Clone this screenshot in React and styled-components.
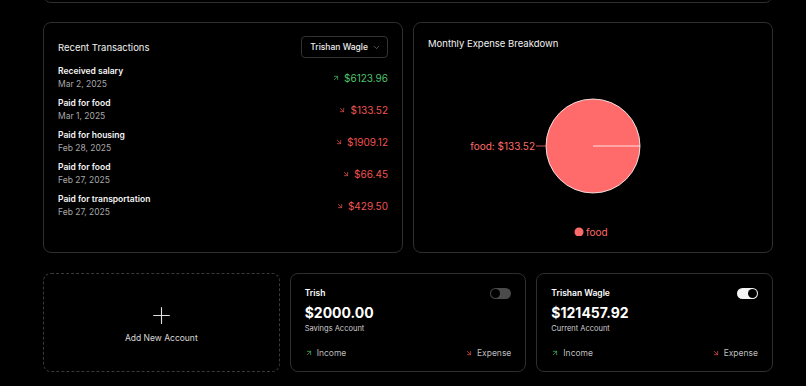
import React from 'react';
import styled, { createGlobalStyle } from 'styled-components';
import { ArrowUpRight, ArrowDownRight, ChevronDown, Plus } from 'lucide-react';

const GlobalStyle = createGlobalStyle`
    html, body {
        margin: 0;
        background: #000;
        color: #fff;
        font-family: Inter, "Noto Sans", sans-serif;
    }
`;

const Page = styled.div`
    width: 730px;
    margin-left: 43px;
    display: flex;
    flex-direction: column;
    gap: 19px;
`;

const Card = styled.div`
    box-sizing: border-box;
    border: 1px solid #2e2e2e;
    border-radius: 8px;
    background: #000;
    padding: 13px 14px;
`;

const StubCard = styled(Card)`
    height: 40px;
    margin-top: -37px;
`;

const TwoCol = styled.div`
    display: grid;
    grid-template-columns: 1fr 1fr;
    gap: 10px;
    margin-bottom: 1px;
`;

const TallCard = styled(Card)`
    height: 231px;
    display: flex;
    flex-direction: column;
`;

const Header = styled.div`
    display: flex;
    align-items: center;
    justify-content: space-between;
    height: 22px;
`;

const Title = styled.h2`
    margin: 0;
    font-size: 9.5px;
    font-weight: 400;
    color: #f2f2f2;
`;

const SelectButton = styled.button`
    box-sizing: border-box;
    height: 22px;
    padding: 0 6px 0 8px;
    border: 1px solid #333;
    border-radius: 4px;
    background: #000;
    color: #eee;
    font-family: inherit;
    font-size: 8.5px;
    font-weight: 500;
    display: flex;
    align-items: center;
    gap: 4px;
`;

const List = styled.div`
    display: flex;
    flex-direction: column;
    gap: 6px;
    margin-top: 7px;
`;

const Row = styled.div`
    display: flex;
    align-items: center;
    justify-content: space-between;
`;

const RowTitle = styled.div`
    font-size: 8.5px;
    font-weight: 600;
    line-height: 13px;
    color: #f5f5f5;
`;

const RowDate = styled.div`
    font-size: 8.5px;
    line-height: 13px;
    color: #a8a8a8;
`;

const Amount = styled.div`
    display: flex;
    align-items: center;
    gap: 4px;
    font-size: 10px;
    color: ${(p) => (p.$up ? '#4cc46c' : '#ef5350')};
`;

const ChartTitle = styled(Title)`
    line-height: 14px;
    margin-top: 1px;
    margin-bottom: 5px;
`;

const ThreeCol = styled.div`
    display: grid;
    grid-template-columns: repeat(3, 1fr);
    gap: 10px;
`;

const AddCard = styled.button`
    box-sizing: border-box;
    height: 99px;
    border: 1px dashed #3a3a3a;
    border-radius: 8px;
    background: #000;
    color: #d8d8d8;
    font-family: inherit;
    font-size: 8.5px;
    line-height: 11px;
    display: flex;
    flex-direction: column;
    align-items: center;
    justify-content: center;
    gap: 4px;
    padding: 0;
`;

const AccountCard = styled(Card)`
    height: 99px;
    display: flex;
    flex-direction: column;
`;

const AccountTop = styled.div`
    display: flex;
    align-items: center;
    justify-content: space-between;
`;

const AccountName = styled.div`
    font-size: 8.5px;
    font-weight: 600;
    line-height: 13px;
`;

const Toggle = styled.div`
    box-sizing: border-box;
    width: 21px;
    height: 11px;
    border-radius: 6px;
    background: ${(p) => (p.$on ? '#f4f4f4' : '#4a4a4a')};
    display: flex;
    align-items: center;
    justify-content: ${(p) => (p.$on ? 'flex-end' : 'flex-start')};
    padding: 1px;

    &::after {
        content: '';
        width: 9px;
        height: 9px;
        border-radius: 50%;
        background: #000;
    }
`;

const Balance = styled.div`
    font-size: 14px;
    font-weight: 700;
    line-height: 18px;
    margin-top: 4px;
`;

const AccountType = styled.div`
    font-size: 7.5px;
    line-height: 10px;
    margin-top: 2px;
    color: #cfcfcf;
`;

const Flows = styled.div`
    margin-top: auto;
    display: flex;
    justify-content: space-between;
    align-items: center;
    font-size: 8.5px;
    color: #bdbdbd;
`;

const Flow = styled.span`
    display: flex;
    align-items: center;
    gap: 4px;
    svg {
        color: ${(p) => (p.$up ? '#4cc46c' : '#ef5350')};
    }
`;

const transactions = [
    { title: 'Received salary', date: 'Mar 2, 2025', amount: '$6123.96', up: true },
    { title: 'Paid for food', date: 'Mar 1, 2025', amount: '$133.52' },
    { title: 'Paid for housing', date: 'Feb 28, 2025', amount: '$1909.12' },
    { title: 'Paid for food', date: 'Feb 27, 2025', amount: '$66.45' },
    { title: 'Paid for transportation', date: 'Feb 27, 2025', amount: '$429.50' },
];

const accounts = [
    { name: 'Trish', balance: '$2000.00', type: 'Savings Account', on: false },
    { name: 'Trishan Wagle', balance: '$121457.92', type: 'Current Account', on: true },
];

const PIE = '#ff6b6b';

function ExpensePie() {
    return (
        <svg width="330" height="180" viewBox="0 0 330 180">
            <circle cx="165" cy="90" r="47" fill={PIE} stroke="#fff" strokeWidth="0.8" />
            <line x1="165" y1="90" x2="212" y2="90" stroke="#fff" strokeWidth="0.8" />
            <line x1="108" y1="90" x2="118" y2="90" stroke={PIE} strokeWidth="0.8" />
            <text x="107" y="93.5" textAnchor="end" fill={PIE} fontSize="10" fontFamily="Inter, sans-serif">
                food: $133.52
            </text>
            <circle cx="151" cy="176" r="4.5" fill={PIE} />
            <text x="158" y="179.5" fill={PIE} fontSize="10" fontFamily="Inter, sans-serif">
                food
            </text>
        </svg>
    );
}

export default function App() {
    return (
        <>
            <GlobalStyle />
            <Page>
                <StubCard />
                <TwoCol>
                    <TallCard>
                        <Header>
                            <Title>Recent Transactions</Title>
                            <SelectButton type="button">
                                Trishan Wagle
                                <ChevronDown size={9} strokeWidth={1.5} color="#999" />
                            </SelectButton>
                        </Header>
                        <List>
                            {transactions.map((t, i) => (
                                <Row key={i}>
                                    <div>
                                        <RowTitle>{t.title}</RowTitle>
                                        <RowDate>{t.date}</RowDate>
                                    </div>
                                    <Amount $up={t.up}>
                                        {t.up ? (
                                            <ArrowUpRight size={8} strokeWidth={2} />
                                        ) : (
                                            <ArrowDownRight size={8} strokeWidth={2} />
                                        )}
                                        {t.amount}
                                    </Amount>
                                </Row>
                            ))}
                        </List>
                    </TallCard>
                    <TallCard>
                        <ChartTitle>Monthly Expense Breakdown</ChartTitle>
                        <ExpensePie />
                    </TallCard>
                </TwoCol>
                <ThreeCol>
                    <AddCard type="button">
                        <Plus size={27} strokeWidth={1} color="#e0e0e0" />
                        Add New Account
                    </AddCard>
                    {accounts.map((a) => (
                        <AccountCard key={a.name}>
                            <AccountTop>
                                <AccountName>{a.name}</AccountName>
                                <Toggle $on={a.on} />
                            </AccountTop>
                            <Balance>{a.balance}</Balance>
                            <AccountType>{a.type}</AccountType>
                            <Flows>
                                <Flow $up>
                                    <ArrowUpRight size={8} strokeWidth={2} />
                                    Income
                                </Flow>
                                <Flow>
                                    <ArrowDownRight size={8} strokeWidth={2} />
                                    Expense
                                </Flow>
                            </Flows>
                        </AccountCard>
                    ))}
                </ThreeCol>
            </Page>
        </>
    );
}
